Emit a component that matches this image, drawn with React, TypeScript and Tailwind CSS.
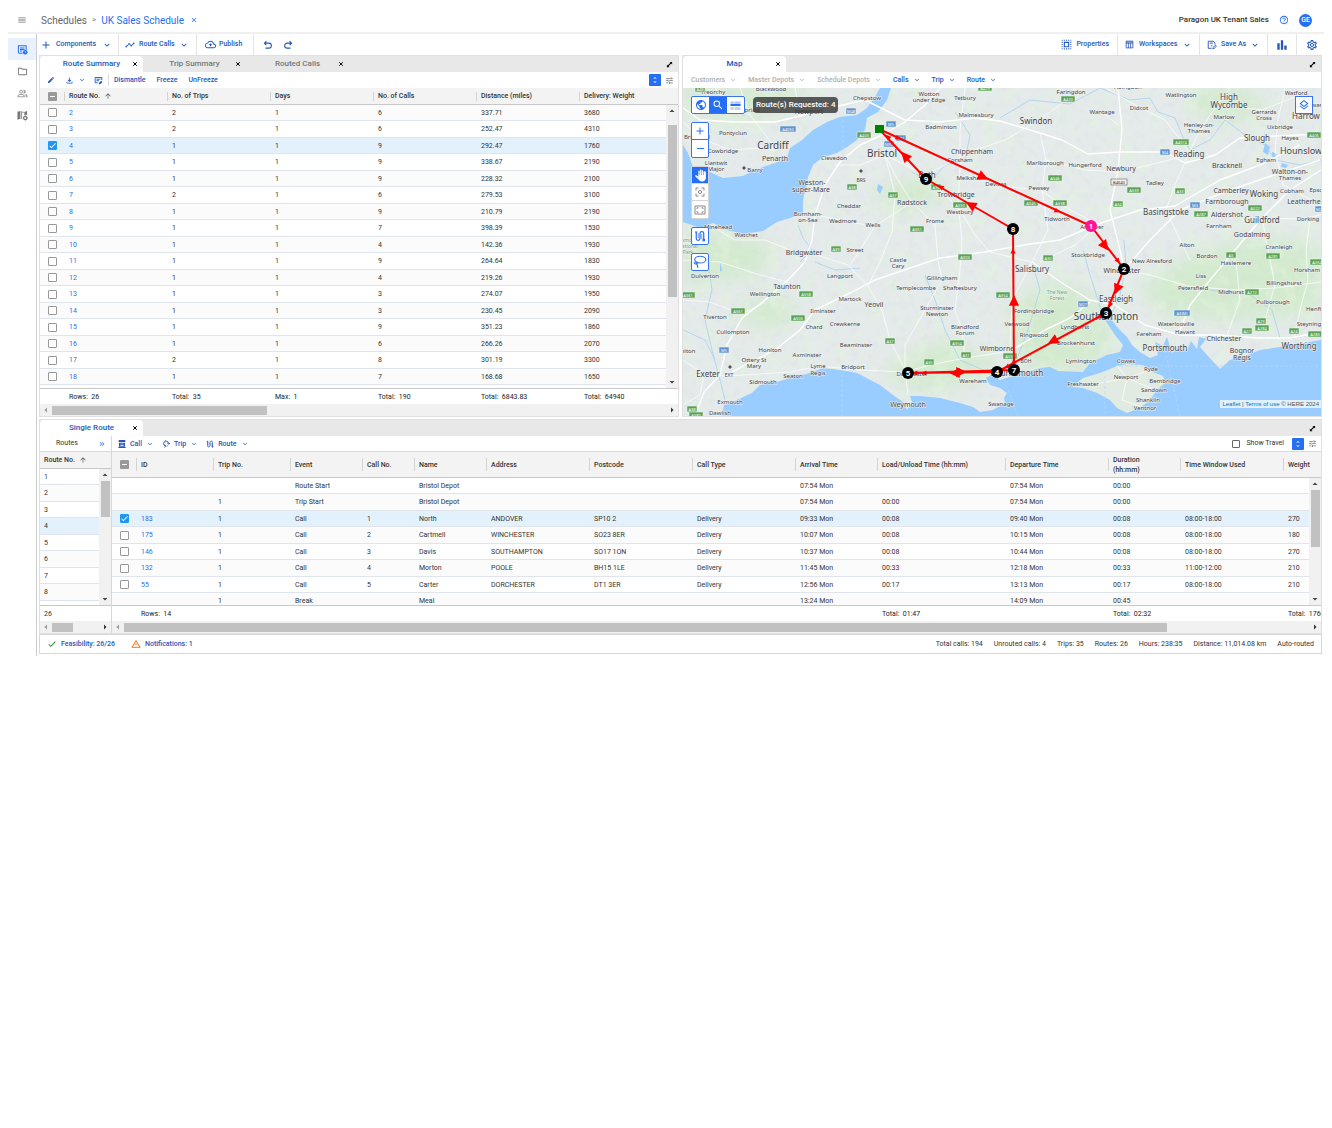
import React from "react";
import {
  MdAdd,
  MdArrowDropDown,
  MdArrowDropUp,
  MdArrowLeft,
  MdArrowRight,
  MdArrowUpward,
  MdBarChart,
  MdCenterFocusWeak,
  MdCheck,
  MdClose,
  MdEdit,
  MdHelpOutline,
  MdKeyboardArrowDown,
  MdKeyboardDoubleArrowRight,
  MdMenu,
  MdOutlineBackup,
  MdOutlineFileDownload,
  MdOutlineFolder,
  MdOutlineLayers,
  MdOutlinePeopleAlt,
  MdOutlineSettings,
  MdPublic,
  MdSearch,
  MdSelectAll,
  MdTimeline,
  MdTune,
  MdUnfoldMore,
  MdWarningAmber,
} from "react-icons/md";

/* ---------- icons ---------- */

type IconProps = { className?: string };

const CrossIcon = ({ className }: IconProps) => (
  <svg viewBox="0 0 24 24" className={className} fill="none" stroke="currentColor" strokeWidth="4" aria-hidden="true">
    <path d="M5 5l14 14M19 5L5 19" />
  </svg>
);

const ExpandIcon = ({ className }: IconProps) => (
  <svg viewBox="0 0 24 24" className={className} fill="currentColor" aria-hidden="true">
    <path d="M12 3h9v9l-3.200-3.200L8.800 17.800 12 21H3v-9l3.200 3.200 9-9z" />
  </svg>
);

const ScheduleIcon = ({ className }: IconProps) => (
  <svg viewBox="0 0 24 24" className={className} fill="none" stroke="currentColor" strokeWidth="2.2" aria-hidden="true">
    <path d="M12 20H5a2 2 0 0 1-2-2V4h17v9" />
    <path d="M6.500 8.500h10M6.500 12h10M6.500 15.500h5" />
    <circle cx="18" cy="18" r="5" fill="currentColor" stroke="none" />
    <path d="M18 15.500V18l2 1.500" stroke="#e6effd" strokeWidth="1.400" />
  </svg>
);

const MapGearIcon = ({ className }: IconProps) => (
  <svg viewBox="0 0 24 24" className={className} fill="currentColor" aria-hidden="true">
    <path d="M1 4l6-2v17l-6 2z" />
    <path d="M8 2l7 2.500V6h-4v13.500L8 19z" opacity=".75" />
    <path d="M16 4.500L22 2v9.500a7 7 0 0 0-6-.3z" />
    <circle cx="18" cy="17.500" r="3.600" fill="none" stroke="currentColor" strokeWidth="2.600" />
    <path d="M18 12v2M18 21v2M12.500 17.500h2M21.500 17.500h2" stroke="currentColor" strokeWidth="2" />
  </svg>
);

const UndoIcon = ({ className }: IconProps) => (
  <svg viewBox="0 0 24 24" className={className} fill="none" stroke="currentColor" strokeWidth="2.600" aria-hidden="true">
    <path d="M8 2.500L3.500 7.500 8 12.500M4 7.500h10a6 6 0 0 1 0 12H6" />
  </svg>
);

const RedoIcon = ({ className }: IconProps) => (
  <svg viewBox="0 0 24 24" className={className} fill="none" stroke="currentColor" strokeWidth="2.600" aria-hidden="true">
    <path d="M16 2.500l4.500 5-4.500 5M20 7.500H10a6 6 0 0 0 0 12h8" />
  </svg>
);

const WorkspaceIcon = ({ className }: IconProps) => (
  <svg viewBox="0 0 24 24" className={className} fill="none" stroke="currentColor" strokeWidth="2.200" aria-hidden="true">
    <path d="M3 3h18v18H3zM3 8.500h18M9 8.500V21M15 8.500V21" />
    <path d="M3 5.500h18" />
  </svg>
);

const SaveAsIcon = ({ className }: IconProps) => (
  <svg viewBox="0 0 24 24" className={className} fill="none" stroke="currentColor" strokeWidth="2.200" aria-hidden="true">
    <path d="M11 20H3V3h12l4 4v4" />
    <path d="M6.500 7.500h8M9 14h4" />
    <path d="M14 21l1-3.500 5-5 2.500 2.500-5 5z" />
  </svg>
);

const NoteEditIcon = ({ className }: IconProps) => (
  <svg viewBox="0 0 24 24" className={className} fill="none" stroke="currentColor" strokeWidth="2.400" aria-hidden="true">
    <path d="M10 18H3V4h18v7M6.500 8.500h11M6.500 12.500h7" />
    <path d="M13 22v-3.500l6-6 3.500 3.500-6 6z" fill="currentColor" stroke="none" />
  </svg>
);

const RouteIcon = ({ className }: IconProps) => (
  <svg viewBox="0 0 24 24" className={className} fill="none" stroke="currentColor" strokeWidth="2.400" aria-hidden="true">
    <path d="M2 4h5M4.500 4v13a3.700 3.700 0 0 0 7.500 0V7a3.700 3.700 0 0 1 7.500 0v13" />
    <path d="M8.500 6.500v10M15.500 8v10" strokeWidth="1.400" />
    <circle cx="19.500" cy="20" r="1.800" />
  </svg>
);

const CallIcon = ({ className }: IconProps) => (
  <svg viewBox="0 0 24 24" className={className} fill="currentColor" aria-hidden="true">
    <path d="M2 0h20v6H2z" />
    <path d="M3 8h18v12H3zm4 3v2h10v-2zm0 4v2h10v-2z" fillRule="evenodd" />
    <path d="M1 21h22v3H1z" />
  </svg>
);

const TripIcon = ({ className }: IconProps) => (
  <svg viewBox="0 0 24 24" className={className} fill="none" stroke="currentColor" strokeWidth="2.800" aria-hidden="true">
    <path d="M10 18.500A8 8 0 0 1 10 3.500M14 3.500a8 8 0 0 1 6 7.500M14 18.500a8 8 0 0 0 3-1.500" />
    <path d="M16 9l4 4 4-4M8 14l3 4.500L7 22M10 1l3 2.500L10 7" />
  </svg>
);

const HandIcon = ({ className }: IconProps) => (
  <svg viewBox="0 0 24 24" className={className} fill="currentColor" aria-hidden="true">
    <path d="M22 6v10c0 4-3 7-7.300 7-2.600 0-4.600-1-6-3L1.500 12.500c1.200-1.400 2.700-1.200 3.800-.3L8 14.500V4.300C8 2.500 10.300 2.500 10.300 4.300V11h.9V2.600c0-2 2.600-2 2.600 0V11h.9V3.700c0-1.900 2.500-1.900 2.500 0V11h.9V6c0-2.200 3.800-2.200 3.800 0z" />
  </svg>
);

const FitIcon = ({ className }: IconProps) => (
  <svg viewBox="0 0 24 24" className={className} fill="none" stroke="currentColor" strokeWidth="2" aria-hidden="true">
    <path d="M2 4h20v16H2z" />
    <path d="M6 10V7.500h3M15 7.500h3V10M18 14v2.500h-3M9 16.500H6V14" />
  </svg>
);

const LassoIcon = ({ className }: IconProps) => (
  <svg viewBox="0 0 24 24" className={className} fill="none" stroke="currentColor" strokeWidth="1.900" aria-hidden="true">
    <ellipse cx="12.500" cy="8" rx="9.500" ry="5.800" />
    <path d="M5 11.500c-3 1-3 4 0 3.800s3.500-3 1-3.200M7 15c0 3 1.500 3.500 1 7" />
  </svg>
);

const LegendIcon = ({ className }: IconProps) => (
  <svg viewBox="0 0 24 24" className={className} fill="currentColor" aria-hidden="true">
    <path d="M1 3h7v4H1zM10 3h13v4H10z" opacity=".4" />
    <path d="M1 8h22v5H1z" />
    <path d="M1 15h7v7H1zM10 15h13v7H10z" opacity=".3" />
  </svg>
);

/* ---------- shared pieces ---------- */

function Tick({ label, checked = false, mixed = false }: { label: string; checked?: boolean; mixed?: boolean }) {
  return (
    <span className="relative block size-[9px] shrink-0">
      <input
        type="checkbox"
        aria-label={label}
        defaultChecked={checked}
        className={
          mixed
            ? "block size-[9px] appearance-none rounded-[1px] bg-[#999]"
            : "block size-[9px] appearance-none rounded-[1px] border border-[#999] bg-white checked:border-[#2196f3] checked:bg-[#2196f3]"
        }
      />
      {checked && <MdCheck className="pointer-events-none absolute inset-0 size-[9px] text-white" />}
      {mixed && <span className="pointer-events-none absolute inset-x-[2px] top-1 h-px bg-white" />}
    </span>
  );
}

function Tab({ label, active = false }: { label: string; active?: boolean }) {
  return (
    <div
      className={
        active
          ? "flex w-[103px] items-center rounded-t bg-white pl-4 text-[#2457b8]"
          : "flex w-[103px] items-center pl-4 text-[#777]"
      }
    >
      <button className="flex-1 text-center text-[8px] leading-4 font-medium whitespace-nowrap">{label}</button>
      <button aria-label={`Close ${label}`} className="flex w-4 justify-center text-black">
        <CrossIcon className="size-[6px]" />
      </button>
    </div>
  );
}

function TabBar({ tabs }: { tabs: string[] }) {
  return (
    <div className="flex h-4 bg-[#e8e8e8]">
      {tabs.map((t, i) => (
        <Tab key={t} label={t} active={i === 0} />
      ))}
      <button aria-label="Expand panel" className="mr-[5px] ml-auto flex items-center">
        <ExpandIcon className="size-[7px] text-black" />
      </button>
    </div>
  );
}

function MenuButton({ label, muted = false, icon }: { label: string; muted?: boolean; icon?: React.ReactNode }) {
  return (
    <button
      className={
        muted
          ? "flex items-center gap-1 text-[7px] leading-4 font-medium whitespace-nowrap text-[#b0b0b0]"
          : "flex items-center gap-1 text-[7px] leading-4 font-medium whitespace-nowrap text-[#2457b8]"
      }
    >
      {icon}
      {label}
      <MdKeyboardArrowDown className="size-2" />
    </button>
  );
}

function GridTools() {
  return (
    <>
      <button aria-label="Row height" className="flex size-3 items-center justify-center rounded-[1px] bg-[#246ff5] text-white">
        <MdUnfoldMore className="size-2" />
      </button>
      <button aria-label="Column settings" className="text-[#777]">
        <MdTune className="size-[9px]" />
      </button>
    </>
  );
}

function VScroll({ className, thumb }: { className: string; thumb: string }) {
  return (
    <div className={`absolute right-0 bottom-0 flex w-3 flex-col items-center bg-[#f1f1f1] text-[#444] ${className}`}>
      <MdArrowDropUp className="size-3 shrink-0" />
      <div className={`w-[9px] bg-[#c1c1c1] ${thumb}`} />
      <MdArrowDropDown className="mt-auto size-3 shrink-0" />
    </div>
  );
}

function HScroll({ thumb }: { thumb: string }) {
  return (
    <div className="flex h-3 items-center bg-[#f1f1f1] text-[#333]">
      <MdArrowLeft className="size-3 shrink-0 text-[#999]" />
      <div className="flex-1">
        <div className={`h-[9px] bg-[#c1c1c1] ${thumb}`} />
      </div>
      <MdArrowRight className="size-3 shrink-0" />
    </div>
  );
}

/* ---------- data ---------- */

const summaryCols = ["Route No.", "No. of Trips", "Days", "No. of Calls", "Distance (miles)", "Delivery: Weight"];
const summaryRows: string[][] = [
  ["2", "2", "1", "6", "337.71", "3680"],
  ["3", "2", "1", "6", "252.47", "4310"],
  ["4", "1", "1", "9", "292.47", "1760"],
  ["5", "1", "1", "9", "338.67", "2190"],
  ["6", "1", "1", "9", "228.32", "2100"],
  ["7", "2", "1", "6", "279.53", "3100"],
  ["8", "1", "1", "9", "210.79", "2190"],
  ["9", "1", "1", "7", "398.39", "1530"],
  ["10", "1", "1", "4", "142.36", "1930"],
  ["11", "1", "1", "9", "264.64", "1830"],
  ["12", "1", "1", "4", "219.26", "1930"],
  ["13", "1", "1", "3", "274.07", "1950"],
  ["14", "1", "1", "3", "230.45", "2090"],
  ["15", "1", "1", "9", "351.23", "1860"],
  ["16", "1", "1", "6", "266.26", "2070"],
  ["17", "2", "1", "8", "301.19", "3300"],
  ["18", "1", "1", "7", "168.68", "1650"],
];
const summaryTotals = ["Rows:  26", "Total:  35", "Max:  1", "Total:  190", "Total:  6843.83", "Total:  64940"];

const callCols = [
  "ID",
  "Trip No.",
  "Event",
  "Call No.",
  "Name",
  "Address",
  "Postcode",
  "Call Type",
  "Arrival Time",
  "Load/Unload Time (hh:mm)",
  "Departure Time",
  "Duration (hh:mm)",
  "Time Window Used",
  "Weight",
];
const callRows: string[][] = [
  ["", "", "Route Start", "", "Bristol Depot", "", "", "", "07:54 Mon", "", "07:54 Mon", "00:00", "", ""],
  ["", "1", "Trip Start", "", "Bristol Depot", "", "", "", "07:54 Mon", "00:00", "07:54 Mon", "00:00", "", ""],
  ["183", "1", "Call", "1", "North", "ANDOVER", "SP10 2", "Delivery", "09:33 Mon", "00:08", "09:40 Mon", "00:08", "08:00-18:00", "270"],
  ["175", "1", "Call", "2", "Cartmell", "WINCHESTER", "SO23 8ER", "Delivery", "10:07 Mon", "00:08", "10:15 Mon", "00:08", "08:00-18:00", "180"],
  ["146", "1", "Call", "3", "Davis", "SOUTHAMPTON", "SO17 1ON", "Delivery", "10:37 Mon", "00:08", "10:44 Mon", "00:08", "08:00-18:00", "270"],
  ["132", "1", "Call", "4", "Morton", "POOLE", "BH15 1LE", "Delivery", "11:45 Mon", "00:33", "12:18 Mon", "00:33", "11:00-12:00", "210"],
  ["55", "1", "Call", "5", "Carter", "DORCHESTER", "DT1 3ER", "Delivery", "12:56 Mon", "00:17", "13:13 Mon", "00:17", "08:00-18:00", "210"],
  ["", "1", "Break", "", "Meal", "", "", "", "13:24 Mon", "", "14:09 Mon", "00:45", "", ""],
];
const callTotals = ["Rows:  14", "", "", "", "", "", "", "", "", "Total:  01:47", "", "Total:  02:32", "", "Total:  1760"];

/* ---------- data grid ---------- */

function SummaryColumns() {
  return (
    <colgroup>
      <col className="w-[24px]" />
      <col className="w-[103px]" />
      <col className="w-[103px]" />
      <col className="w-[103px]" />
      <col className="w-[103px]" />
      <col className="w-[103px]" />
      <col />
    </colgroup>
  );
}

function CallColumns() {
  return (
    <colgroup>
      <col className="w-[24px]" />
      <col className="w-[77px]" />
      <col className="w-[77px]" />
      <col className="w-[72px]" />
      <col className="w-[52px]" />
      <col className="w-[72px]" />
      <col className="w-[103px]" />
      <col className="w-[103px]" />
      <col className="w-[103px]" />
      <col className="w-[82px]" />
      <col className="w-[128px]" />
      <col className="w-[103px]" />
      <col className="w-[72px]" />
      <col className="w-[103px]" />
      <col />
    </colgroup>
  );
}

type GridProps = {
  name: string;
  columns: string[];
  rows: string[][];
  totals: string[];
  selected: number;
  sorted?: boolean;
  tall?: boolean;
  colgroup: React.ReactNode;
};

function DataGrid({ name, columns, rows, totals, selected, sorted, tall, colgroup }: GridProps) {
  return (
    <>
      <div className={tall ? "relative h-[153px] overflow-hidden" : "relative h-[300px] overflow-hidden"}>
        <table aria-label={name} className="w-full table-fixed border-separate border-spacing-0 text-left text-[7px] leading-[10px] whitespace-nowrap text-[#333]">
          {colgroup}
          <thead>
            <tr className={tall ? "h-[26px] bg-[#f3f3f3]" : "h-[17px] bg-[#f3f3f3]"}>
              <th className="border-b border-[#c8c8c8] pl-2">
                <Tick label="Select all" mixed />
              </th>
              {columns.map((c, i) => (
                <th key={c} className="border-b border-[#c8c8c8] font-medium">
                  <div className={tall ? "flex h-5 items-center gap-1" : "flex h-[10px] items-center gap-1"}>
                    <span className={tall ? "h-[13px] w-px shrink-0 bg-[#d4d4d4]" : "h-[9px] w-px shrink-0 bg-[#d4d4d4]"} />
                    <span className={c.startsWith("Duration") ? "w-10 whitespace-normal" : ""}>{c}</span>
                    {sorted && i === 0 && <MdArrowUpward className="size-2 text-[#555]" />}
                  </div>
                </th>
              ))}
              {!tall && <th className="border-b border-[#c8c8c8]" aria-label="Spacer" />}
            </tr>
          </thead>
          <tbody>
            {rows.map((r, ri) => {
              const isSelected = ri === selected;
              const call = !tall || r[0] !== "";
              const tone = isSelected
                ? "bg-[#e3f1fc]"
                : (tall ? ri % 2 === 1 : ri % 2 === 0)
                  ? "bg-[#fbfbfb]"
                  : "bg-white";
              return (
                <tr key={ri} className={`h-4 even:h-[17px] ${tone}`}>
                  <td className="border-b border-[#e0e4ec] pl-2">
                    {call && <Tick label={`Select ${r[0]}`} checked={isSelected} />}
                  </td>
                  {r.map((v, ci) => (
                    <td key={ci} className="border-b border-[#e0e4ec] pl-[5px]">
                      {ci === 0 && v ? (
                        <a href="#" className="text-[#2f6fe8]">
                          {v}
                        </a>
                      ) : (
                        v
                      )}
                    </td>
                  ))}
                  {!tall && <td className="border-b border-[#e0e4ec]" />}
                </tr>
              );
            })}
          </tbody>
        </table>
        <VScroll className={tall ? "top-[26px]" : "top-[17px]"} thumb={tall ? "h-[57px]" : "h-[172px] mt-2"} />
      </div>
      <div className="h-4 overflow-hidden border-t border-[#c8c8c8]">
        <table aria-label={`${name} totals`} className="w-full table-fixed border-separate border-spacing-0 text-left text-[7px] leading-4 whitespace-pre text-[#222]">
          {colgroup}
          <tbody>
            <tr>
              <td />
              {totals.map((t, i) => (
                <td key={i} className="pl-[5px]">
                  {t}
                </td>
              ))}
              {!tall && <td />}
            </tr>
          </tbody>
        </table>
      </div>
    </>
  );
}

/* ---------- map ---------- */

type Label = [string, number, number, number];

const labels: Label[] = [
  ["Treorchy", 713, 92, 6], ["Blackwood", 771, 89, 6], ["Chepstow", 867, 98, 6], ["Wotton", 929, 94, 6], ["under Edge", 929, 100, 6],
  ["Tetbury", 965, 98, 6], ["Malmesbury", 976, 115, 6], ["Badminton", 941, 127, 6], ["Newport", 809, 111, 7], ["Pontypridd", 744, 110, 6],
  ["Pontyclun", 733, 133, 6], ["Bridgend", 697, 137, 6], ["Cardiff", 773, 145, 10], ["Penarth", 775, 158, 7], ["Cowbridge", 723, 151, 6],
  ["Llantwit", 716, 163, 6], ["Major", 716, 169, 6], ["Barry", 755, 170, 6], ["Clevedon", 834, 158, 6], ["Bristol", 882, 153, 10],
  ["Chippenham", 972, 151, 7], ["Corsham", 960, 160, 6], ["Melksham", 971, 178, 6], ["Devizes", 996, 184, 6], ["Bath", 927, 174, 8],
  ["Weston-", 812, 182, 7], ["super-Mare", 811, 189, 7], ["Trowbridge", 956, 194, 7], ["Westbury", 960, 212, 6], ["Radstock", 912, 202, 7],
  ["Cheddar", 849, 206, 6], ["Burnham-", 808, 214, 6], ["on-Sea", 808, 220, 6], ["Wedmore", 843, 221, 6], ["Wells", 873, 225, 6],
  ["Frome", 935, 221, 6], ["Minehead", 718, 227, 6], ["Watchet", 746, 235, 6], ["Bridgwater", 804, 252, 7], ["Street", 855, 250, 6],
  ["Castle", 898, 260, 6], ["Cary", 898, 266, 6], ["Dulverton", 705, 276, 6], ["Langport", 840, 276, 6], ["Gillingham", 942, 278, 6],
  ["Taunton", 787, 286, 7], ["Wellington", 765, 294, 6], ["Templecombe", 916, 288, 6], ["Shaftesbury", 960, 288, 6], ["Martock", 850, 299, 6],
  ["Yeovil", 874, 304, 7], ["Ilminster", 823, 311, 6], ["Sturminster", 937, 308, 6], ["Newton", 937, 314, 6], ["Tiverton", 715, 317, 6],
  ["Chard", 814, 327, 6], ["Crewkerne", 845, 324, 6], ["Cullompton", 733, 332, 6], ["Blandford", 965, 327, 6], ["Forum", 965, 333, 6],
  ["Honiton", 770, 350, 6], ["Beaminster", 856, 345, 6], ["Axminster", 807, 355, 6], ["Wimborne", 997, 348, 7], ["Ottery St", 754, 360, 6],
  ["Mary", 754, 366, 6], ["Lyme", 818, 366, 6], ["Regis", 818, 373, 6], ["Bridport", 853, 367, 6], ["Exeter", 708, 373, 8],
  ["Seaton", 793, 376, 6], ["Sidmouth", 763, 382, 6], ["Dorchester", 912, 374, 6], ["Wareham", 973, 381, 6], ["Exmouth", 730, 402, 6],
  ["Dawlish", 720, 413, 6], ["Weymouth", 908, 404, 7], ["Swanage", 1001, 404, 6], ["Honiton", 684, 351, 6], ["EXT", 729, 375, 5],
  ["Faringdon", 1071, 92, 6], ["Abingdon", 1128, 87, 6], ["Watlington", 1181, 95, 6], ["High", 1229, 96, 8], ["Wycombe", 1229, 104, 8],
  ["Watford", 1296, 93, 6], ["Edgware", 1313, 105, 6], ["Harrow", 1306, 115, 8], ["Wantage", 1102, 112, 6], ["Didcot", 1139, 108, 6],
  ["Swindon", 1036, 120, 8], ["Marlow", 1224, 117, 6], ["Gerrards", 1264, 112, 6], ["Cross", 1264, 118, 6], ["Henley-on-", 1199, 125, 6],
  ["Thames", 1199, 131, 6], ["Uxbridge", 1280, 127, 6], ["Slough", 1257, 137, 8], ["Hayes", 1290, 138, 6], ["Reading", 1189, 153, 8],
  ["Hounslow", 1301, 150, 9], ["Marlborough", 1045, 163, 6], ["Hungerford", 1085, 165, 6], ["Newbury", 1121, 168, 7], ["Egham", 1266, 160, 6],
  ["Bracknell", 1227, 165, 7], ["Walton-on-", 1290, 171, 7], ["Thames", 1290, 178, 6], ["Pewsey", 1039, 188, 6], ["Tadley", 1155, 183, 6],
  ["Camberley", 1231, 190, 7], ["Woking", 1264, 193, 8], ["Cobham", 1292, 191, 6], ["Epsom", 1319, 190, 6], ["Farnborough", 1227, 201, 7],
  ["Leatherhead", 1308, 201, 7], ["Basingstoke", 1166, 211, 8], ["Aldershot", 1227, 214, 7], ["Guildford", 1262, 219, 8], ["Dorking", 1308, 219, 6],
  ["Tidworth", 1057, 219, 6], ["Farnham", 1219, 226, 6], ["Andover", 1092, 227, 6], ["Godalming", 1252, 234, 7], ["Alton", 1187, 245, 6],
  ["Cranleigh", 1279, 247, 6], ["Stockbridge", 1088, 255, 6], ["Bordon", 1207, 256, 6], ["New Alresford", 1152, 261, 6], ["Haslemere", 1236, 263, 6],
  ["Salisbury", 1032, 268, 8], ["Winchester", 1122, 270, 7], ["Horsham", 1307, 270, 6], ["Liss", 1201, 276, 6], ["Billingshurst", 1284, 283, 6],
  ["Petersfield", 1193, 288, 6], ["Midhurst", 1231, 292, 6], ["Eastleigh", 1116, 298, 8], ["Pulborough", 1273, 302, 6], ["Henfield", 1318, 309, 6],
  ["Fordingbridge", 1034, 311, 6], ["Southampton", 1106, 316, 10], ["Verwood", 1017, 324, 6], ["Lyndhurst", 1075, 327, 6], ["Waterlooville", 1176, 324, 6],
  ["Steyning", 1309, 324, 6], ["Fareham", 1149, 334, 6], ["Havant", 1185, 332, 6], ["Ringwood", 1034, 335, 6], ["Brockenhurst", 1076, 343, 6],
  ["Chichester", 1224, 338, 7], ["Portsmouth", 1165, 347, 8], ["Worthing", 1299, 345, 8], ["Bognor", 1242, 350, 7], ["Regis", 1242, 357, 7],
  ["Lymington", 1081, 361, 6], ["Cowes", 1126, 361, 6], ["Ryde", 1151, 369, 6], ["Bournemouth", 1017, 372, 8], ["Newport", 1126, 377, 6],
  ["Bembridge", 1165, 381, 6], ["Freshwater", 1083, 384, 6], ["Sandown", 1154, 390, 6], ["Shanklin", 1148, 400, 6], ["Ventnor", 1145, 408, 6],
];

const parkLabels: Label[] = [
  ["The New", 1057, 292, 5], ["Forest", 1057, 298, 5], ["Exmoor", 688, 240, 5], ["National", 688, 246, 5], ["Park", 688, 252, 5],
];

const airportLabels: Label[] = [
  ["BRS", 861, 180, 5], ["BOH", 1026, 361, 5],
];

type Shield = [string, number, number, boolean?];

const shields: Shield[] = [
  ["A48", 700, 89], ["A4050", 788, 129, true], ["M48", 851, 111, true], ["A403", 864, 135], ["M5", 891, 124, true], ["M4", 901, 138, true],
  ["M32", 889, 144, true], ["A38", 852, 187], ["A37", 893, 195], ["A36", 936, 187], ["A350", 960, 205], ["A361", 917, 229], ["A39", 836, 249],
  ["A303", 965, 257], ["A358", 806, 294], ["A361", 738, 311], ["A303", 798, 318], ["A354", 1003, 295], ["A37", 890, 341], ["A354", 957, 343],
  ["A31", 966, 355], ["A35", 929, 362], ["M5", 724, 350, true], ["A38", 692, 409], ["A380", 696, 415], ["A361", 688, 295], ["A420", 1068, 99],
  ["A4074", 1181, 142], ["M4", 1165, 152, true], ["A406", 1314, 135], ["A346", 1055, 178], ["A339", 1134, 190], ["A33", 1180, 191],
  ["A345", 1031, 203], ["A338", 1060, 203], ["A34", 1118, 204], ["M3", 1195, 205, true], ["A287", 1201, 214], ["A322", 1255, 208],
  ["A30", 1048, 258], ["A3", 1231, 255], ["A281", 1273, 256], ["A264", 1317, 262], ["M27", 1083, 304, true], ["A272", 1252, 292],
  ["A3(M)", 1182, 313, true], ["A29", 1261, 321], ["A284", 1262, 328], ["A27", 1247, 331], ["A24", 1294, 331], ["A283", 1315, 334],
  ["A338", 1010, 356], ["A429", 985, 88], ["M25", 1320, 209, true],
];

const roads = [
  "M683 108L700 120L735 122L775 122L800 116L830 108L865 100L905 120L940 122L975 118L1000 121L1040 133L1062 140L1088 154L1120 152L1165 152L1185 163L1215 155L1240 138L1275 136L1321 134",
  "M940 88L925 105L905 122L882 135L860 145L840 162L825 185L815 215L812 240L805 262L788 280L765 300L742 318L727 345L720 375L704 392L695 416",
  "M725 376L745 365L775 350L800 330L815 310L850 293L875 280L910 268L940 258L985 252L1030 244L1060 240L1098 224L1140 210L1175 206L1220 180L1260 165L1300 145",
  "M1118 88L1122 130L1118 170L1110 210L1120 250L1124 270L1116 300L1105 320",
  "M1032 262L1065 285L1090 300L1115 305L1145 325L1180 335L1220 335L1255 338L1290 338L1321 332",
  "M1012 350L1045 330L1070 318L1090 302",
  "M1321 170L1290 190L1262 218L1235 250L1210 280L1190 305L1178 335",
  "M1124 270L1150 240L1180 210L1225 192L1265 178L1320 160",
];

const minorRoads = [
  "M1040 133L1046 160L1042 190L1048 230L1032 262L1012 300L1010 345",
  "M868 286L882 310L890 340L905 370L908 395",
  "M868 286L848 265L820 256L790 250L765 240L735 240L710 225",
  "M868 286L880 262L892 232L895 195L885 155",
  "M725 376L760 374L790 372L820 366L860 370L905 372L930 365L965 358L1005 352",
  "M925 175L940 190L960 210L975 235L990 252L1032 262",
  "M965 358L962 330L955 310L960 270L962 240L958 205L960 170L960 130L965 88",
  "M683 300L710 302L742 314L765 302",
  "M683 260L720 262L760 275L788 282",
  "M683 360L704 374L725 376M704 374L700 395L683 405",
  "M1045 160L1085 170L1118 172L1150 165L1188 155",
  "M1188 155L1175 185L1166 210L1180 240L1190 260",
  "M1075 88L1060 105L1036 122L1005 140L975 150L925 175L885 155",
  "M1230 88L1210 115L1195 140L1188 155M1230 106L1262 110L1300 95",
  "M1285 88L1278 120L1275 150L1283 185L1321 205",
  "M1262 218L1300 219L1321 215M1310 219L1306 250L1308 280L1300 310L1294 338",
  "M1188 286L1235 290L1275 288L1321 282M1188 286L1150 275L1124 270",
  "M1236 262L1240 300L1226 338M1262 218L1268 250L1275 285L1262 330",
  "M683 122L700 138L730 150L760 148L775 150M740 88L750 115L773 145M715 88L735 110L750 115M795 88L800 116",
  "M885 155L860 165L835 165M885 155L895 175L912 202L935 225L938 260L942 280L925 310L905 345L905 372",
  "M1098 224L1070 210L1040 190L1000 186L965 175M1098 224L1075 245L1040 262",
  "M1106 88L1135 105L1165 120L1188 150M1102 112L1118 125",
  "M815 215L850 222L875 226L912 202M875 226L860 250L850 265",
  "M1117 366L1127 378L1150 370M1127 378L1122 400L1145 408M1127 378L1090 385M1127 378L1155 390",
];

const rivers = [
  "M800 262L812 250L803 238L798 225", "M1032 262L1040 290L1028 330L1012 372", "M1083 250L1090 275L1098 300L1103 318",
  "M1124 240L1126 265L1120 295L1110 318", "M1100 88L1130 100L1150 98L1158 112L1175 118L1182 135L1190 150L1210 140L1225 120L1245 135L1265 145L1275 160L1300 165L1321 160",
  "M912 172L930 182L945 165L965 160L970 135L955 112", "M860 268L835 270L815 262", "M725 400L720 380L712 350L705 320L712 290L708 262",
  "M988 372L960 360L945 330L935 300L925 275", "M1280 338L1272 310L1250 295L1210 290", "M683 330L705 340L715 360", "M1000 118L1030 100L1070 104L1100 88",
];

const southSea =
  "M722 416L724 405L730 403L752 393L760 385L777 382L793 377L807 374L823 368L840 370L857 373L880 385L893 395L903 402L907 410L912 402L910 396L920 396L940 398L960 403L973 407L980 412L993 410L1005 403L1004 398L1007 393L1000 388L990 385L986 378L993 374L1000 380L1020 374L1040 368L1050 367L1058 371L1083 372L1090 363L1107 355L1120 352L1123 345L1115 335L1107 323L1101 313L1108 315L1117 327L1127 337L1132 345L1140 352L1150 358L1158 355L1155 342L1163 346L1167 337L1172 353L1180 348L1187 351L1191 341L1197 349L1199 337L1206 339L1200 347L1207 355L1220 369L1230 360L1243 357L1260 350L1287 346L1321 340V416Z";
const channel =
  "M683 145L688 153L693 167L710 172L723 178L743 176L760 168L775 163L787 158L790 148L802 140L813 130L827 122L840 117L857 115L867 108L875 97L880 88H891L887 100L878 112L867 118L865 130L857 140L847 147L837 153L823 157L813 165L808 177L805 190L803 200L803 213L790 218L777 222L763 231L743 234L727 230L713 223L700 228L683 222Z";
const isleOfWight =
  "M1072 387L1083 378L1100 373L1117 366L1127 364L1143 365L1153 372L1163 376L1165 383L1157 390L1150 400L1140 408L1127 413L1117 408L1110 400L1097 393L1083 388Z";

type Arrow = [number, number, number, number];

/* x, y, heading in degrees, size */
const arrows: Arrow[] = [
  [898, 138, 25, 3], [983, 177, 25, 6], [1057, 211, 25, 3], [1105, 246, 52, 6], [1118, 261, 52, 3], [1117, 289, 112, 6], [1110, 305, 112, 3],
  [1053, 341, 152, 6], [1099, 317, 152, 3], [1007, 367, 152, 3], [955, 373, 180, 6], [961, 372, 0, 6], [924, 373, 180, 3], [915, 373, 180, 3],
  [1014, 301, 270, 6], [1013, 251, 270, 3], [1014, 361, 270, 3], [971, 205, 210, 6], [941, 187, 210, 3], [905, 156, 228, 6], [888, 137, 228, 3],
];

const stops: [string, number, number][] = [
  ["2", 1124, 269], ["3", 1106, 313], ["4", 997, 372], ["5", 908, 373], ["7", 1014, 370], ["8", 1013, 229], ["9", 926, 179],
];

function RouteMap() {
  return (
    <svg
      viewBox="683 88 638 328"
      preserveAspectRatio="xMidYMid slice"
      className="absolute inset-0 size-full"
      role="img"
      aria-label="Map of southern England with route 4"
    >
      <defs>
        <filter id="woods" x="0" y="0" width="100%" height="100%">
          <feTurbulence type="fractalNoise" baseFrequency="0.06" numOctaves="4" seed="8" />
          <feColorMatrix values="0 0 0 0 0.76  0 0 0 0 0.9  0 0 0 0 0.72  0 5 0 0 -2.5" />
        </filter>
        <filter id="relief" x="0" y="0" width="100%" height="100%">
          <feTurbulence type="fractalNoise" baseFrequency="0.12" numOctaves="3" seed="21" />
          <feColorMatrix values="0 0 0 0 0.62  0 0 0 0 0.68  0 0 0 0 0.68  3 0 0 0 -1.5" />
        </filter>
        <filter id="soft" x="-10%" y="-10%" width="120%" height="120%">
          <feGaussianBlur stdDeviation="9" />
        </filter>
      </defs>
      <rect x="683" y="88" width="638" height="328" fill="#e5eaeb" />
      <g fill="#d0ebca" filter="url(#soft)" opacity=".85">
        <path d="M683 88h125l-10 20-60 12-55-8zM683 228l50 5 40 12-10 30-80 10z" />
        <path d="M1010 300l50-20 40 20 15 40-25 30-60 2-20-30zM1140 285l60-35 60-15 61 10v70l-100 5-60-5z" />
        <path d="M1190 88h60l20 25-40 10-40-10zM870 190l60-15 20 20-50 20zM760 295l40 10-20 25-50-10zM880 370l60-30 60 20-30 25-60 5z" />
      </g>
      <rect x="683" y="88" width="638" height="328" filter="url(#woods)" opacity=".45" />
      <rect x="683" y="88" width="638" height="328" filter="url(#relief)" opacity=".2" />
      <path d={channel} fill="#99ccff" />
      <path d={southSea} fill="#99ccff" />
      <path d={isleOfWight} fill="#e1ebe1" />
      <path d="M1265 143l5 4-2 8-5-3zM1272 152l5 2-1 4-4-2zM1282 163l6 2-2 3-5-1zM878 184l5 3-3 7-3-4zM720 262l2 8-2 2z" fill="#99ccff" />
      <g fill="none" stroke="#a9d0f3" strokeWidth="1" opacity=".8" strokeLinejoin="round">
        {rivers.map((d) => (
          <path key={d} d={d} />
        ))}
      </g>
      <g fill="none" stroke="#fff" strokeLinejoin="round">
        <g strokeWidth=".8" opacity=".9">
          {minorRoads.map((d) => (
            <path key={d} d={d} />
          ))}
        </g>
        <g strokeWidth="1.400">
          {roads.map((d) => (
            <path key={d} d={d} />
          ))}
        </g>
      </g>
      <g fill="none" stroke="#b8dafa" strokeWidth=".7" strokeDasharray="3 2">
        <path d="M1003 376L1018 416M1165 350L1180 416M1105 376V416M842 374V416M1120 366H1321M843 120V160" />
      </g>
      <g textAnchor="middle" dominantBaseline="central" fontFamily="'Noto Sans', sans-serif" fill="#3f444b" stroke="#eef1f1" strokeWidth="1" paintOrder="stroke">
        {labels.map(([t, x, y, s]) => (
          <text key={`${t}${x}`} x={x} y={y} fontSize={s}>
            {t}
          </text>
        ))}
        {airportLabels.map(([t, x, y, s]) => (
          <text key={t} x={x} y={y} fontSize={s}>
            {t}
          </text>
        ))}
        <g fill="#6fa673">
          {parkLabels.map(([t, x, y, s]) => (
            <text key={t} x={x} y={y} fontSize={s}>
              {t}
            </text>
          ))}
        </g>
      </g>
      <g textAnchor="middle" dominantBaseline="central" fontFamily="'Noto Sans', sans-serif" fontSize="4" fill="#fff">
        {shields.map(([t, x, y, blue]) => {
          const half = t.length > 4 ? 8 : t.length > 3 ? 7 : 5;
          return (
            <g key={`${t}${x}`}>
              <rect x={x - half} y={y - 3} width={half * 2} height="6" fill={blue ? "#5f93d2" : "#5aa355"} stroke="#e8f1e8" strokeWidth=".6" />
              <text x={x} y={y}>
                {t}
              </text>
            </g>
          );
        })}
        <rect x="1111" y="179" width="16" height="6" fill="#f2efe6" stroke="#666" strokeWidth=".6" />
        <text x="1119" y="182" fill="#333">
          B4640
        </text>
      </g>
      <path d="M742 168l2-2 2 2-2 2zM859 171l2-2 2 2-2 2zM728 367l2-2 2 2-2 2z" fill="#555" />
      <g fill="#f00" stroke="#f00">
        <path
          d="M879 129L1091 226L1124 269L1106 313L997 372L908 373L1014 370L1013 229L926 179Z"
          fill="none"
          strokeWidth="2"
          strokeLinejoin="round"
        />
        <g stroke="none">
          {arrows.map(([x, y, a, s]) => (
            <path key={`${x}-${y}`} d={`M${s} 0L${-s * 0.8} ${-s * 0.85}V${s * 0.85}Z`} transform={`translate(${x} ${y}) rotate(${a})`} />
          ))}
        </g>
      </g>
      <rect x="875" y="125" width="9" height="8" fill="#008000" />
      <g textAnchor="middle" dominantBaseline="central" fontFamily="Roboto, sans-serif" fontSize="8" fontWeight="700" fill="#fff">
        {stops.map(([n, x, y]) => (
          <g key={n}>
            <circle cx={x} cy={y} r="6" fill="#000" />
            <text x={x} y={y}>
              {n}
            </text>
          </g>
        ))}
        <circle cx="1091" cy="226" r="6" fill="#ff1493" />
        <text x="1091" y="226">
          1
        </text>
      </g>
    </svg>
  );
}

function MapPanel() {
  const tool = "flex h-[17px] w-4 items-center justify-center";
  const single = "mt-2 flex size-[18px] items-center justify-center rounded-[2px] border border-[#3575f0] bg-white";
  return (
    <section aria-label="Map" className="flex min-w-0 flex-1 flex-col border border-[#e0e0e0]">
      <TabBar tabs={["Map"]} />
      <div className="flex h-4 items-center gap-[11px] pl-2">
        <MenuButton label="Customers" muted />
        <MenuButton label="Master Depots" muted />
        <MenuButton label="Schedule Depots" muted />
        <MenuButton label="Calls" />
        <MenuButton label="Trip" />
        <MenuButton label="Route" />
      </div>
      <div className="relative flex-1 overflow-hidden">
        <RouteMap />
        <div className="absolute top-2 left-2 flex items-center gap-2">
          <div className="flex overflow-hidden rounded-[2px] border border-[#3575f0] bg-white text-[#246ff5]">
            <button aria-label="World view" className="flex h-4 w-[17px] items-center justify-center">
              <MdPublic className="size-3" />
            </button>
            <button aria-label="Search" className="flex h-4 w-[18px] items-center justify-center bg-[#246ff5] text-white">
              <MdSearch className="size-3" />
            </button>
            <button aria-label="Legend" className="flex h-4 w-[17px] items-center justify-center">
              <LegendIcon className="size-[11px]" />
            </button>
          </div>
          <div className="rounded bg-[#333]/80 px-[3px] text-[8px] leading-4 font-medium text-white">Route(s) Requested: 4</div>
        </div>
        <div className="absolute top-[34px] left-2 flex flex-col text-[#246ff5]">
          <div className="flex flex-col divide-y divide-[#3575f0] rounded-[2px] border border-[#3575f0] bg-white">
            <button aria-label="Zoom in" className={tool}>
              <MdAdd className="size-3" />
            </button>
            <button aria-label="Zoom out" className={tool}>
              <span className="h-px w-[7px] bg-[#246ff5]" />
            </button>
          </div>
          <div className="mt-2 flex flex-col divide-y divide-[#d5d5d5] rounded-[2px] border border-[#d5d5d5] bg-white text-[#888]">
            <button aria-label="Pan" className={`${tool} bg-[#246ff5] text-white`}>
              <HandIcon className="size-[13px]" />
            </button>
            <button aria-label="Centre" className={tool}>
              <MdCenterFocusWeak className="size-3" />
            </button>
            <button aria-label="Fit to window" className={tool}>
              <FitIcon className="size-3" />
            </button>
          </div>
          <button aria-label="Show routes" className={single}>
            <RouteIcon className="size-3" />
          </button>
          <button aria-label="Lasso" className={single}>
            <LassoIcon className="size-[14px]" />
          </button>
        </div>
        <button aria-label="Layers" className="absolute top-2 right-2 flex size-[18px] items-center justify-center border border-[#3575f0] bg-white text-[#246ff5]">
          <MdOutlineLayers className="size-3" />
        </button>
        <p className="absolute right-0 bottom-2 bg-white/70 px-[2px] font-['Liberation_Sans',sans-serif] text-[6px] leading-2 whitespace-nowrap text-[#555]">
          <a href="#" className="text-[#0078a8]">Leaflet</a> | <a href="#" className="text-[#0078a8]">Terms of use</a> © HERE 2024
        </p>
      </div>
    </section>
  );
}

/* ---------- panels ---------- */

function SummaryPanel() {
  return (
    <section aria-label="Route Summary" className="flex min-w-0 flex-1 flex-col border border-[#e0e0e0]">
      <TabBar tabs={["Route Summary", "Trip Summary", "Routed Calls"]} />
      <div className="flex h-4 items-center pr-1 pl-[7px] text-[7px] font-medium text-[#2457b8]">
        <button aria-label="Edit">
          <MdEdit className="size-2" />
        </button>
        <button aria-label="Download" className="ml-[10px] flex items-center gap-1">
          <MdOutlineFileDownload className="size-[9px]" />
          <MdKeyboardArrowDown className="size-2" />
        </button>
        <button aria-label="Edit notes" className="ml-2">
          <NoteEditIcon className="size-[9px]" />
        </button>
        <span className="mx-[5px] h-3 w-px bg-[#ddd]" />
        <div className="flex gap-[11px]">
          <button>Dismantle</button>
          <button>Freeze</button>
          <button>UnFreeze</button>
        </div>
        <div className="ml-auto flex items-center gap-1">
          <GridTools />
        </div>
      </div>
      <DataGrid
        name="Route Summary"
        columns={summaryCols}
        rows={summaryRows}
        totals={summaryTotals}
        selected={2}
        sorted
        colgroup={<SummaryColumns />}
      />
      <HScroll thumb="w-[35%]" />
    </section>
  );
}

function RoutesList() {
  return (
    <div className="flex w-[72px] shrink-0 flex-col border-r border-[#d8d8d8] text-[7px] text-[#333]">
      <div className="flex h-4 items-center border-b border-[#d8d8d8] pr-[5px] pl-4 leading-[15px]">
        Routes
        <button aria-label="Expand routes" className="ml-auto text-[#246ff5]">
          <MdKeyboardDoubleArrowRight className="size-2" />
        </button>
      </div>
      <div className="relative h-[153px] overflow-hidden">
        <table aria-label="Routes" className="w-full border-separate border-spacing-0 text-left leading-[10px]">
          <thead>
            <tr className="h-[17px] bg-[#f3f3f3]">
              <th className="border-b border-[#c8c8c8] pl-1 font-medium">
                <span className="flex items-center gap-1">
                  Route No. <MdArrowUpward className="size-2 text-[#555]" />
                </span>
              </th>
            </tr>
          </thead>
          <tbody>
            {["1", "2", "3", "4", "5", "6", "7", "8"].map((n) => (
              <tr key={n} className={n === "4" ? "h-[17px] bg-[#e3f1fc]" : "h-4 even:h-[17px] even:bg-[#fbfbfb]"}>
                <td className="border-b border-[#e0e4ec] pl-1">{n}</td>
              </tr>
            ))}
          </tbody>
        </table>
        <VScroll className="top-[17px]" thumb="h-9" />
      </div>
      <div className="h-4 border-t border-[#c8c8c8] pl-1 leading-4">26</div>
      <HScroll thumb="w-[44%]" />
    </div>
  );
}

function SingleRoutePanel() {
  return (
    <section aria-label="Single Route" className="border border-[#e0e0e0]">
      <TabBar tabs={["Single Route"]} />
      <div className="flex">
        <RoutesList />
        <div className="min-w-0 flex-1">
          <div className="flex h-4 items-center gap-2 border-b border-[#d8d8d8] pr-1 pl-[6px]">
            <MenuButton label="Call" icon={<CallIcon className="size-2" />} />
            <MenuButton label="Trip" icon={<TripIcon className="size-2" />} />
            <MenuButton label="Route" icon={<RouteIcon className="size-2" />} />
            <div className="ml-auto flex items-center gap-1">
              <label className="mr-1 flex items-center gap-[6px] text-[7px] text-[#333]">
                <input type="checkbox" className="size-2 appearance-none rounded-[1px] border border-[#666] bg-white" />
                Show Travel
              </label>
              <GridTools />
            </div>
          </div>
          <DataGrid
            name="Calls"
            columns={callCols}
            rows={callRows}
            totals={callTotals}
            selected={2}
            tall
            colgroup={<CallColumns />}
          />
          <HScroll thumb="w-[88%]" />
        </div>
      </div>
    </section>
  );
}

/* ---------- shell ---------- */

function Sidebar() {
  const item = "flex h-[22px] items-center justify-center text-[#777]";
  return (
    <nav aria-label="Main" className="flex w-[29px] shrink-0 flex-col border-r border-[#ccc] pt-1">
      <a href="#" aria-label="Schedules" className="flex h-[22px] items-center justify-center bg-[#e9f1fe] text-[#246ff5]">
        <ScheduleIcon className="size-[11px]" />
      </a>
      <a href="#" aria-label="Files" className={item}>
        <MdOutlineFolder className="size-[11px]" />
      </a>
      <a href="#" aria-label="Users" className={item}>
        <MdOutlinePeopleAlt className="size-[11px] opacity-70" />
      </a>
      <a href="#" aria-label="Map settings" className={item}>
        <MapGearIcon className="size-[11px]" />
      </a>
    </nav>
  );
}

function Toolbar() {
  const action = "flex h-full items-center text-[7px] font-medium whitespace-nowrap";
  const iconOnly = "flex h-full items-center border-l border-[#e4e4e4]";
  return (
    <div className="flex h-[21px] items-center justify-between text-[#2457b8]">
      <div className="flex h-full items-center">
        <button className={`${action} w-[79px] gap-1 pl-px`}>
          <MdAdd className="size-3" />
          Components
          <MdKeyboardArrowDown className="ml-[2px] size-[10px]" />
        </button>
        <button className={`${action} w-[78px] gap-1 border-l border-[#e4e4e4] pl-[6px]`}>
          <MdTimeline className="size-[10px]" />
          Route Calls
          <MdKeyboardArrowDown className="size-[10px]" />
        </button>
        <button className={`${action} w-[57px] gap-[3px] border-l border-[#e4e4e4] pl-2`}>
          <MdOutlineBackup className="size-[11px]" />
          Publish
        </button>
        <div className="flex h-full items-center gap-[10px] border-l border-[#e4e4e4] pl-[9px]">
          <button aria-label="Undo">
            <UndoIcon className="size-[10px]" />
          </button>
          <button aria-label="Redo">
            <RedoIcon className="size-[10px]" />
          </button>
        </div>
      </div>
      <div className="flex h-full items-center">
        <button className={`${action} gap-[3px] pr-2`}>
          <MdSelectAll className="size-[13px]" />
          Properties
        </button>
        <button className={`${action} w-[82px] gap-[5px] border-l border-[#e4e4e4] pl-[7px]`}>
          <WorkspaceIcon className="size-[9px]" />
          Workspaces
          <MdKeyboardArrowDown className="size-[10px]" />
        </button>
        <button className={`${action} w-[68px] gap-1 border-l border-[#e4e4e4] pl-[7px]`}>
          <SaveAsIcon className="size-[10px]" />
          Save As
          <MdKeyboardArrowDown className="size-[10px]" />
        </button>
        <button aria-label="Reports" className={`${iconOnly} w-[29px] justify-center`}>
          <MdBarChart className="size-[14px]" />
        </button>
        <button aria-label="Settings" className={`${iconOnly} w-[26px] justify-end pr-1`}>
          <MdOutlineSettings className="size-3" />
        </button>
      </div>
    </div>
  );
}

function StatusBar() {
  const totals = [
    "Total calls: 194",
    "Unrouted calls: 4",
    "Trips: 35",
    "Routes: 26",
    "Hours: 238:35",
    "Distance: 11,014.08 km",
    "Auto-routed",
  ];
  return (
    <footer className="flex h-5 items-center border border-[#d8d8d8] px-[7px] text-[7px] text-[#2457b8]">
      <a href="#" className="flex items-center gap-1 font-medium">
        <MdCheck className="size-[10px] text-[#2e7d32]" />
        Feasibility: 26/26
      </a>
      <a href="#" className="ml-4 flex items-center gap-1 font-medium">
        <MdWarningAmber className="size-[10px] text-[#ef6c00]" />
        Notifications: 1
      </a>
      <ul className="ml-auto flex gap-[11px] text-[#333]">
        {totals.map((t) => (
          <li key={t}>{t}</li>
        ))}
      </ul>
    </footer>
  );
}

export default function App() {
  return (
    <div className="bg-white px-2 font-['Roboto',sans-serif] text-[#333]">
      <header className="flex h-[34px] items-center border-b-2 border-[#f0f0f0] pt-2">
        <button aria-label="Menu" className="flex w-7 justify-center text-[#777]">
          <MdMenu className="size-[10px]" />
        </button>
        <nav aria-label="Breadcrumb" className="ml-[5px] flex items-center gap-[5px] text-[10px]">
          <a href="#" className="text-[#666]">
            Schedules
          </a>
          <span className="text-[8px] text-[#777]">&gt;</span>
          <a href="#" className="text-[#246ff5]">
            UK Sales Schedule
          </a>
          <button aria-label="Close schedule" className="ml-px text-[#246ff5]">
            <MdClose className="size-2" />
          </button>
        </nav>
        <div className="ml-auto flex items-center text-[8px] font-medium">
          Paragon UK Tenant Sales
          <button aria-label="Help" className="ml-[10px] text-[#246ff5]">
            <MdHelpOutline className="size-[10px]" />
          </button>
          <button aria-label="Account" className="mr-3 ml-[10px] size-[13px] rounded-full bg-[#246ff5] text-[7px] leading-none font-medium text-white">
            GE
          </button>
        </div>
      </header>
      <div className="flex">
        <Sidebar />
        <main className="min-w-0 flex-1 pr-[2px] pb-[2px] pl-[2px]">
          <Toolbar />
          <div className="flex gap-[3px]">
            <SummaryPanel />
            <MapPanel />
          </div>
          <div className="mt-[2px]">
            <SingleRoutePanel />
          </div>
          <StatusBar />
        </main>
      </div>
    </div>
  );
}
